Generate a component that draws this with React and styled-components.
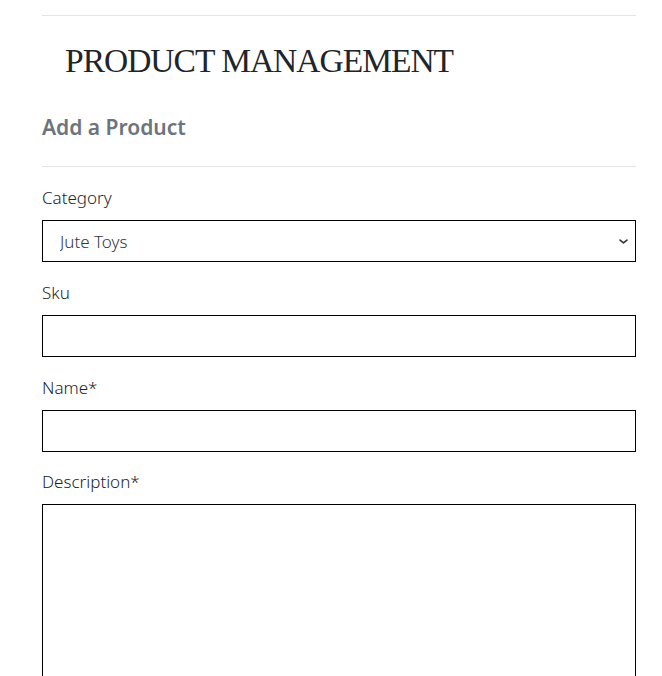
import React from 'react';
import styled, { createGlobalStyle } from 'styled-components';

const GlobalStyle = createGlobalStyle`
  body {
    margin: 0;
    background: #ffffff;
    font-family: "Noto Sans", "Open Sans", sans-serif;
    color: #212529;
  }
`;

const Page = styled.div`
  padding: 15px 26px 0 42px;
  height: 676px;
  overflow: hidden;
  box-sizing: border-box;
`;

const Rule = styled.hr`
  border: 0;
  border-top: 1px solid #e4e4e4;
  margin: 0;
`;

const Title = styled.h1`
  font-family: "Liberation Serif", "DejaVu Serif", serif;
  font-weight: 400;
  font-size: 33.5px;
  letter-spacing: -1px;
  line-height: 1.2;
  margin: 25px 0 0 23px;
  color: #212529;
`;

const Subtitle = styled.h5`
  font-size: 21px;
  font-weight: 600;
  color: #6c757d;
  margin: 34px 0 26px;
  line-height: 1.2;
`;

const Form = styled.form`
  display: flex;
  flex-direction: column;
  padding-top: 19px;
`;

const Field = styled.div`
  display: flex;
  flex-direction: column;
  margin-bottom: 18.7px;
`;

const Label = styled.label`
  font-size: 17px;
  font-weight: 300;
  line-height: 24px;
  margin-bottom: 10px;
  color: #212529;
`;

const Select = styled.select`
  height: 42px;
  border: 1px solid #000;
  border-radius: 0;
  padding: 0 17px;
  font-family: inherit;
  font-size: 17px;
  font-weight: 300;
  color: #33383d;
  background: #fff;
  appearance: none;
  background-image: url("data:image/svg+xml,%3csvg xmlns='http://www.w3.org/2000/svg' viewBox='0 0 16 16'%3e%3cpath fill='none' stroke='%23343a40' stroke-linecap='round' stroke-linejoin='round' stroke-width='2.5' d='M3 6l5 4 5-4'/%3e%3c/svg%3e");
  background-repeat: no-repeat;
  background-position: right 6px center;
  background-size: 11px 11px;
`;

const Input = styled.input`
  height: 42px;
  border: 1px solid #000;
  border-radius: 0;
  padding: 0 16px;
  box-sizing: border-box;
  font-family: inherit;
  font-size: 16px;
`;

const TextArea = styled.textarea`
  height: 200px;
  border: 1px solid #000;
  border-radius: 0;
  padding: 8px 16px;
  box-sizing: border-box;
  font-family: inherit;
  font-size: 16px;
  resize: none;
`;

export default function App() {
  return (
    <>
      <GlobalStyle />
      <Page>
        <Rule />
        <Title>PRODUCT MANAGEMENT</Title>
        <Subtitle>Add a Product</Subtitle>
        <Rule />
        <Form>
          <Field>
            <Label htmlFor="category">Category</Label>
            <Select id="category" defaultValue="jute">
              <option value="jute">Jute Toys</option>
              <option value="wood">Wooden Toys</option>
            </Select>
          </Field>
          <Field>
            <Label htmlFor="sku">Sku</Label>
            <Input id="sku" type="text" />
          </Field>
          <Field>
            <Label htmlFor="name">Name*</Label>
            <Input id="name" type="text" />
          </Field>
          <Field>
            <Label htmlFor="description">Description*</Label>
            <TextArea id="description" />
          </Field>
        </Form>
      </Page>
    </>
  );
}
